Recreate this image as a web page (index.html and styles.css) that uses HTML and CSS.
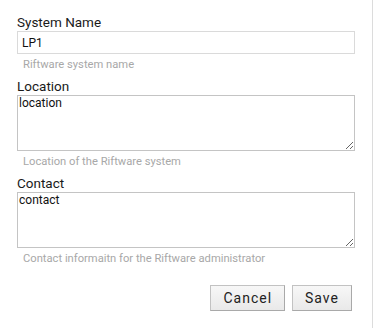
FILE: index.html
```html
<!DOCTYPE html>
<html lang="en">
<head>
    <meta charset="UTF-8">
    <meta name="viewport" content="width=device-width, initial-scale=1.0">
    <title>System settings</title>
    <link rel="stylesheet" href="styles.css">
</head>
<body>
    <div class="panel">
        <div class="field">
            <label for="sysname">System Name</label>
            <input type="text" id="sysname" class="text-in" value="LP1">
            <div class="help">Riftware system name</div>
        </div>

        <div class="field">
            <label for="location">Location</label>
            <textarea id="location" class="area">location</textarea>
            <div class="help">Location of the Riftware system</div>
        </div>

        <div class="field">
            <label for="contact">Contact</label>
            <textarea id="contact" class="area">contact</textarea>
            <div class="help">Contact informaitn for the Riftware administrator</div>
        </div>

        <div class="actions">
            <button class="btn">Cancel</button>
            <button class="btn">Save</button>
        </div>
    </div>
</body>
</html>
```

FILE: styles.css
```css
body {
    margin: 0;
    background: #fff;
    font-family: Roboto, "Liberation Sans", sans-serif;
}

.panel {
    width: 373px;
    height: 328px;
    box-sizing: border-box;
    padding: 14px 17px 0 17px;
    border-right: 1px solid #dcdcdc;
}

.field label {
    display: block;
    font-size: 13.5px;
    line-height: 16px;
    color: #1a1a1a;
    margin-bottom: 1px;
}

.text-in {
    display: block;
    width: 338px;
    height: 23px;
    box-sizing: border-box;
    margin: 0;
    padding: 0 4px;
    border: 1px solid #dadada;
    font-family: Roboto, "Liberation Sans", sans-serif;
    font-size: 12px;
    color: #111;
    outline: none;
}

.area {
    display: block;
    width: 338px;
    height: 56px;
    box-sizing: border-box;
    margin: 0;
    padding: 0 1px;
    border: 1px solid #c4c4c4;
    font-family: Roboto, "Liberation Sans", sans-serif;
    font-size: 12px;
    line-height: 14px;
    color: #111;
    outline: none;
}

.help {
    font-size: 11.2px;
    line-height: 13px;
    color: #a8a8a8;
    padding-left: 6px;
    margin-top: 4px;
    margin-bottom: 7px;
}

.actions {
    display: flex;
    justify-content: flex-end;
    gap: 7px;
    margin-top: 20px;
    padding-right: 3px;
}

.btn {
    height: 26px;
    padding: 0 12px;
    font-family: Roboto, "Liberation Sans", sans-serif;
    font-size: 14px;
    letter-spacing: 1px;
    color: #222;
    background: linear-gradient(#f7f7f7, #e9e9e9);
    border: 1px solid #c2c2c2;
    border-right-color: #a9a9a9;
    border-bottom-color: #a9a9a9;
    border-radius: 0;
    cursor: pointer;
}
```
